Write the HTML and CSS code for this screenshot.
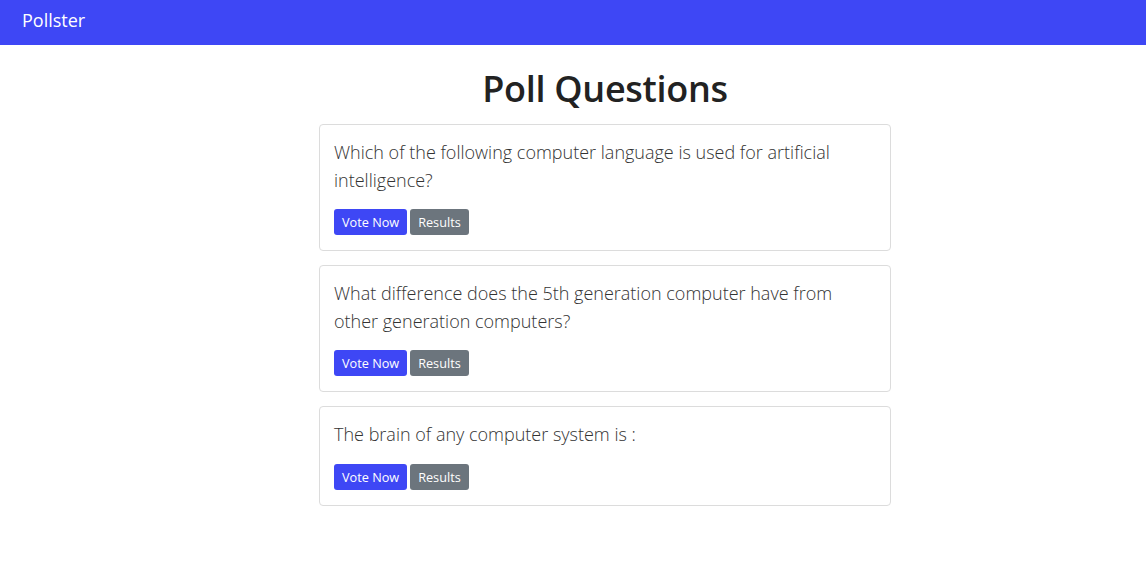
FILE: index.html
```html
<!DOCTYPE html>
<html lang="en">
<head>
<meta charset="utf-8">
<title>Pollster</title>
<link rel="stylesheet" href="styles.css">
</head>
<body>
<nav class="navbar"><a class="brand" href="#">Pollster</a></nav>
<main class="main">
  <h1 class="title">Poll Questions</h1>
  <div class="card">
    <p class="question">Which of the following computer language is used for artificial intelligence?</p>
    <div class="actions"><a class="btn btn-primary" href="#">Vote Now</a><a class="btn btn-secondary" href="#">Results</a></div>
  </div>
  <div class="card">
    <p class="question">What difference does the 5th generation computer have from other generation computers?</p>
    <div class="actions"><a class="btn btn-primary" href="#">Vote Now</a><a class="btn btn-secondary" href="#">Results</a></div>
  </div>
  <div class="card">
    <p class="question">The brain of any computer system is :</p>
    <div class="actions"><a class="btn btn-primary" href="#">Vote Now</a><a class="btn btn-secondary" href="#">Results</a></div>
  </div>
</main>
</body>
</html>
```
FILE: styles.css
```css
* { box-sizing: border-box; }
body {
  margin: 0;
  font-family: "Open Sans", "DejaVu Sans", sans-serif;
  color: #333;
  background: #fff;
}
.navbar {
  height: 45px;
  background: #3e47f5;
  display: flex;
  align-items: center;
  padding: 0 22px 5px;
}
.brand {
  color: #fff;
  text-decoration: none;
  font-size: 18px;
  line-height: 40px;
}
.main {
  width: 572px;
  margin-left: calc(50% - 254px);
  padding-top: 22px;
}
.title {
  margin: 0 0 14px;
  text-align: center;
  font-size: 36px;
  line-height: 43px;
  font-weight: 600;
  color: #222;
  letter-spacing: -0.3px;
}
.card {
  border: 1px solid #dcdcdc;
  border-radius: 4px;
  padding: 14px 14px 15px;
  margin-bottom: 14px;
}
.question {
  margin: 0 0 15px;
  max-width: 520px;
  font-size: 18px;
  font-weight: 300;
  line-height: 27.5px;
  color: #333;
}
.actions {
  display: flex;
  gap: 3px;
}
.btn {
  display: inline-block;
  height: 26px;
  padding: 4px 8px;
  font-size: 12.7px;
  line-height: 18px;
  color: #fff;
  text-decoration: none;
  border-radius: 3px;
}
.btn-primary { background: #3e47f5; }
.btn-secondary { background: #6c757d; }
```
